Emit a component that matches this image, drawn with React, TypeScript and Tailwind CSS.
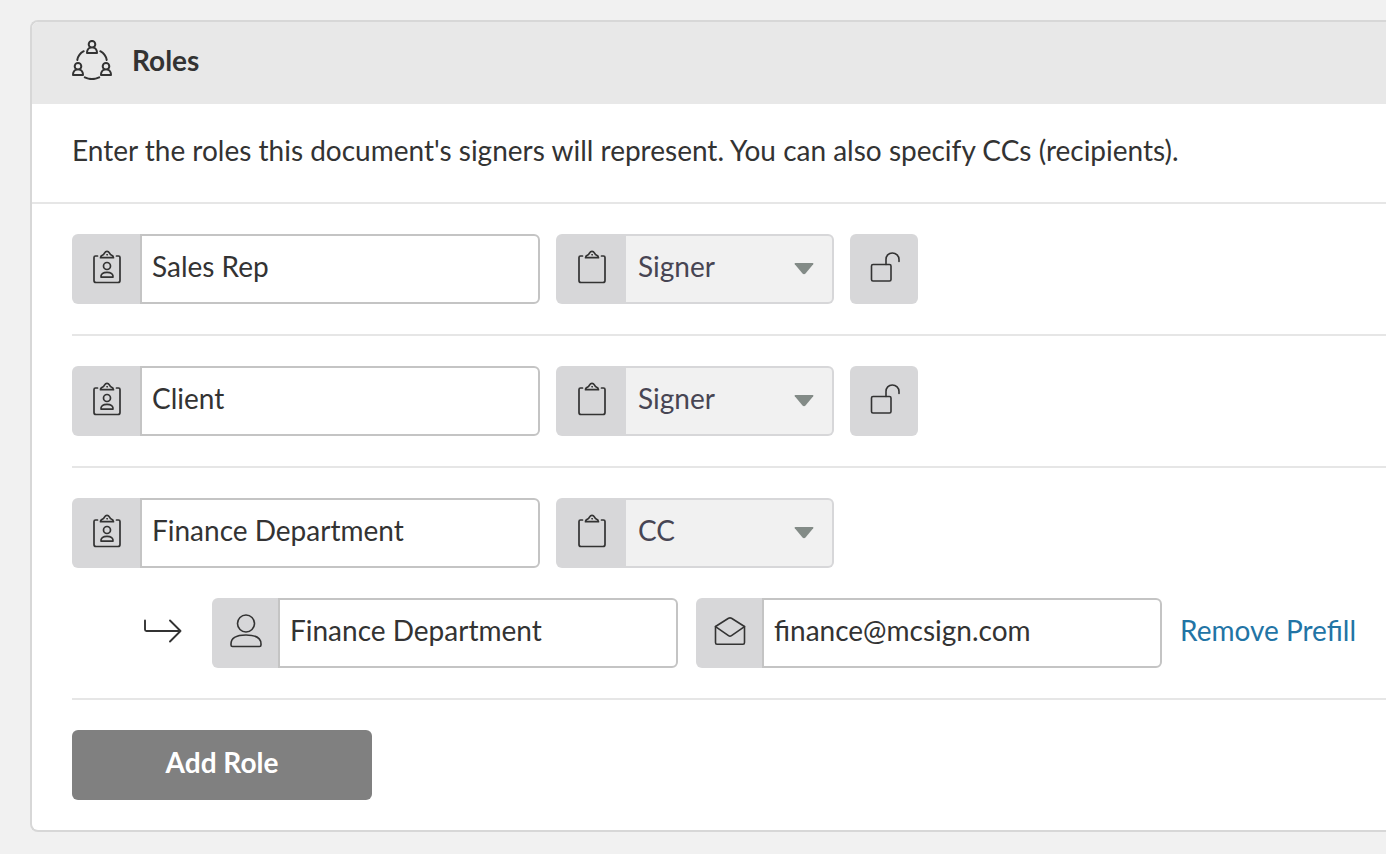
import React, { useState } from "react";

type IconProps = { className?: string };

const stroke = {
  fill: "none",
  stroke: "currentColor",
  strokeLinecap: "round" as const,
  strokeLinejoin: "round" as const,
  "aria-hidden": true,
};

function RolesIcon() {
  const person = (
    <>
      <circle cx="6" cy="4.2" r="3.3" />
      <path d="M4.4 7.6C2.2 8.2 1 9.8 1 13H11C11 9.8 9.8 8.2 7.6 7.6" />
    </>
  );
  return (
    <svg viewBox="0 0 40 40" className="size-10 shrink-0" strokeWidth="2" {...stroke}>
      <g transform="translate(14 0)">{person}</g>
      <g transform="translate(0 22)">{person}</g>
      <g transform="translate(28 22)">{person}</g>
      <path d="M5.3 20C6 16 8.400 13 11.700 11.200M28.300 11.200C31.600 13 34 16 34.700 20M12.800 37.400C17 39.400 23 39.400 27.200 37.400" />
    </svg>
  );
}

function Clipboard({ badge = false }: { badge?: boolean }) {
  return (
    <svg viewBox="0 0 28 34" className="h-[34px] w-7 shrink-0" strokeWidth="1.7" {...stroke}>
      <path d="M4.5 6H2.5Q1 6 1 7.5V30.5Q1 32.500 3 32.500H25Q27 32.500 27 30.500V7.500Q27 6 25.500 6H23.500" />
      <path d="M7.500 7.700C7.500 5.800 9 5.200 10.200 4.700C11.700 4 11.500 1.300 14 1.300S16.300 4 17.800 4.700C19 5.200 20.500 5.800 20.500 7.700Z" />
      <circle cx="14" cy="4.800" r=".4" strokeWidth="1" />
      {badge && (
        <>
          <circle cx="14" cy="16" r="3.500" />
          <path d="M8 27.200C7.500 24.200 10 22.400 14 22.400S20.500 24.200 20 27.200Z" />
        </>
      )}
    </svg>
  );
}

function UnlockIcon() {
  return (
    <svg viewBox="0 0 30 30" className="size-[30px] shrink-0" strokeWidth="1.6" {...stroke}>
      <rect x="1.500" y="12.500" width="19.500" height="16.500" rx="1.500" />
      <path d="M16 12.500V7.500C16 3.700 18.500 1 22.300 1S29 3.700 29 7.500V9.500" />
    </svg>
  );
}

function PersonIcon() {
  return (
    <svg viewBox="0 0 32 34" className="h-[34px] w-8 shrink-0" strokeWidth="1.6" {...stroke}>
      <circle cx="16" cy="9.500" r="8.500" />
      <path d="M1 31V30C1 24.500 6 21 16 21S31 24.500 31 30V31Q31 32.500 29.500 32.500H2.500Q1 32.500 1 31Z" />
    </svg>
  );
}

function MailOpenIcon() {
  return (
    <svg viewBox="0 0 32 28" className="h-7 w-8 shrink-0" strokeWidth="1.6" {...stroke}>
      <path d="M1.500 9.500 14.500 1.300Q16 .500 17.500 1.300L30.500 9.500V25.500Q30.500 27.200 29 27.200H3Q1.500 27.200 1.500 25.500Z" />
      <path d="M1.500 9.700 14.500 18.700Q16 19.700 17.500 18.700L30.500 9.700" />
    </svg>
  );
}

function BranchArrow() {
  return (
    <svg viewBox="0 0 38 24" className="h-6 w-[38px] shrink-0" strokeWidth="1.9" {...stroke}>
      <path d="M1 1.500V10.500Q1 12 2.500 12H36.500M26 1.500 36.500 12 26 22.500" />
    </svg>
  );
}

function CaretIcon({ className }: IconProps) {
  return (
    <svg viewBox="0 0 20 12" className={className} fill="#838b87" aria-hidden="true">
      <path d="M1.500 0H18.500Q20 0 19.200 1.300L11.500 10.500Q10 12 8.500 10.500L.8 1.300Q0 0 1.500 0Z" />
    </svg>
  );
}

type FieldProps = {
  id: string;
  label: string;
  value: string;
  icon: React.ReactNode;
  type?: string;
  narrow?: boolean;
};

function TextField({ id, label, value, icon, type = "text", narrow = false }: FieldProps) {
  const [text, setText] = useState(value);
  return (
    <div className={`flex h-[70px] ${narrow ? "w-[466px]" : "w-[468px]"}`}>
      <label
        htmlFor={id}
        aria-label={label}
        className={`flex shrink-0 items-center justify-center rounded-l-md bg-[#d7d7d9] pb-1 pl-0.5 ${narrow ? "w-[66px]" : "w-[68px]"}`}
      >
        {icon}
      </label>
      <input
        id={id}
        type={type}
        aria-label={label}
        value={text}
        onChange={(e) => setText(e.target.value)}
        className="min-w-0 flex-1 rounded-r-md border-2 border-[#c4c4c4] bg-white px-2.5 pb-1.5 outline-none focus:border-[#8a8a8a]"
      />
    </div>
  );
}

function TypeField({ id, label, value }: { id: string; label: string; value: string }) {
  const [kind, setKind] = useState(value);
  return (
    <div className="flex h-[70px] w-[278px]">
      <label
        htmlFor={id}
        aria-label={label}
        className="flex w-[70px] shrink-0 items-center justify-center rounded-l-md bg-[#d7d7d9] pb-1 pl-0.5"
      >
        <Clipboard />
      </label>
      <span className="relative flex min-w-0 flex-1">
        <select
          id={id}
          aria-label={label}
          value={kind}
          onChange={(e) => setKind(e.target.value)}
          className="w-full appearance-none rounded-r-md border-y-2 border-r-2 border-[#d7d7d9] bg-[#f1f1f1] pb-1.5 pl-3 text-[#474553] outline-none"
        >
          <option>Signer</option>
          <option>CC</option>
        </select>
        <CaretIcon className="pointer-events-none absolute top-[29px] right-5 h-3 w-5" />
      </span>
    </div>
  );
}

function RoleFields({ id, name, kind, lockable }: { id: string; name: string; kind: string; lockable?: boolean }) {
  return (
    <div className="flex gap-4">
      <TextField id={`${id}-name`} label="Role name" value={name} icon={<Clipboard badge />} />
      <TypeField id={`${id}-type`} label="Role type" value={kind} />
      {lockable && (
        <button
          type="button"
          aria-label="Lock role"
          className="flex h-[70px] w-[68px] items-center justify-center rounded-md bg-[#d7d7d9] pb-1 pl-0.5"
        >
          <UnlockIcon />
        </button>
      )}
    </div>
  );
}

export default function App() {
  return (
    <main className="min-h-screen overflow-x-hidden bg-[#f1f1f1] py-5 pl-[30px] font-['Lato',sans-serif] text-[28px] leading-8 text-[#333]">
      <section className="overflow-hidden rounded-l-lg border-y-2 border-l-2 border-[#d7d7d7] bg-white">
        <header className="flex h-[82px] items-center gap-5 bg-[#e8e8e8] px-10 pb-1.5">
          <RolesIcon />
          <h1 className="font-bold">Roles</h1>
        </header>
        <p className="border-b-2 border-[#e6e6e6] px-10 pt-[30px] pb-9 whitespace-nowrap">
          Enter the roles this document's signers will represent. You can also specify CCs (recipients).
        </p>
        <div className="pl-10">
          <div className="border-b-2 border-[#e6e6e6] py-[30px]">
            <RoleFields id="sales" name="Sales Rep" kind="Signer" lockable />
          </div>
          <div className="border-b-2 border-[#e6e6e6] py-[30px]">
            <RoleFields id="client" name="Client" kind="Signer" lockable />
          </div>
          <div className="flex flex-col gap-[30px] border-b-2 border-[#e6e6e6] py-[30px]">
            <RoleFields id="finance" name="Finance Department" kind="CC" />
            <div className="flex items-center gap-[18px] pl-[72px]">
              <div className="mr-3 flex pb-1">
                <BranchArrow />
              </div>
              <TextField
                id="recipient-name"
                label="Recipient name"
                value="Finance Department"
                icon={<PersonIcon />}
                narrow
              />
              <TextField
                id="recipient-email"
                label="Recipient email"
                value="finance@mcsign.com"
                type="email"
                icon={<MailOpenIcon />}
                narrow
              />
              <a href="#remove-prefill" className="pb-1.5 whitespace-nowrap text-[#2274a5]">
                Remove Prefill
              </a>
            </div>
          </div>
          <div className="py-[30px]">
            <button
              type="button"
              className="flex h-[70px] w-[300px] items-center justify-center rounded-md bg-[#808080] pb-1.5 font-bold text-white"
            >
              Add Role
            </button>
          </div>
        </div>
      </section>
    </main>
  );
}
